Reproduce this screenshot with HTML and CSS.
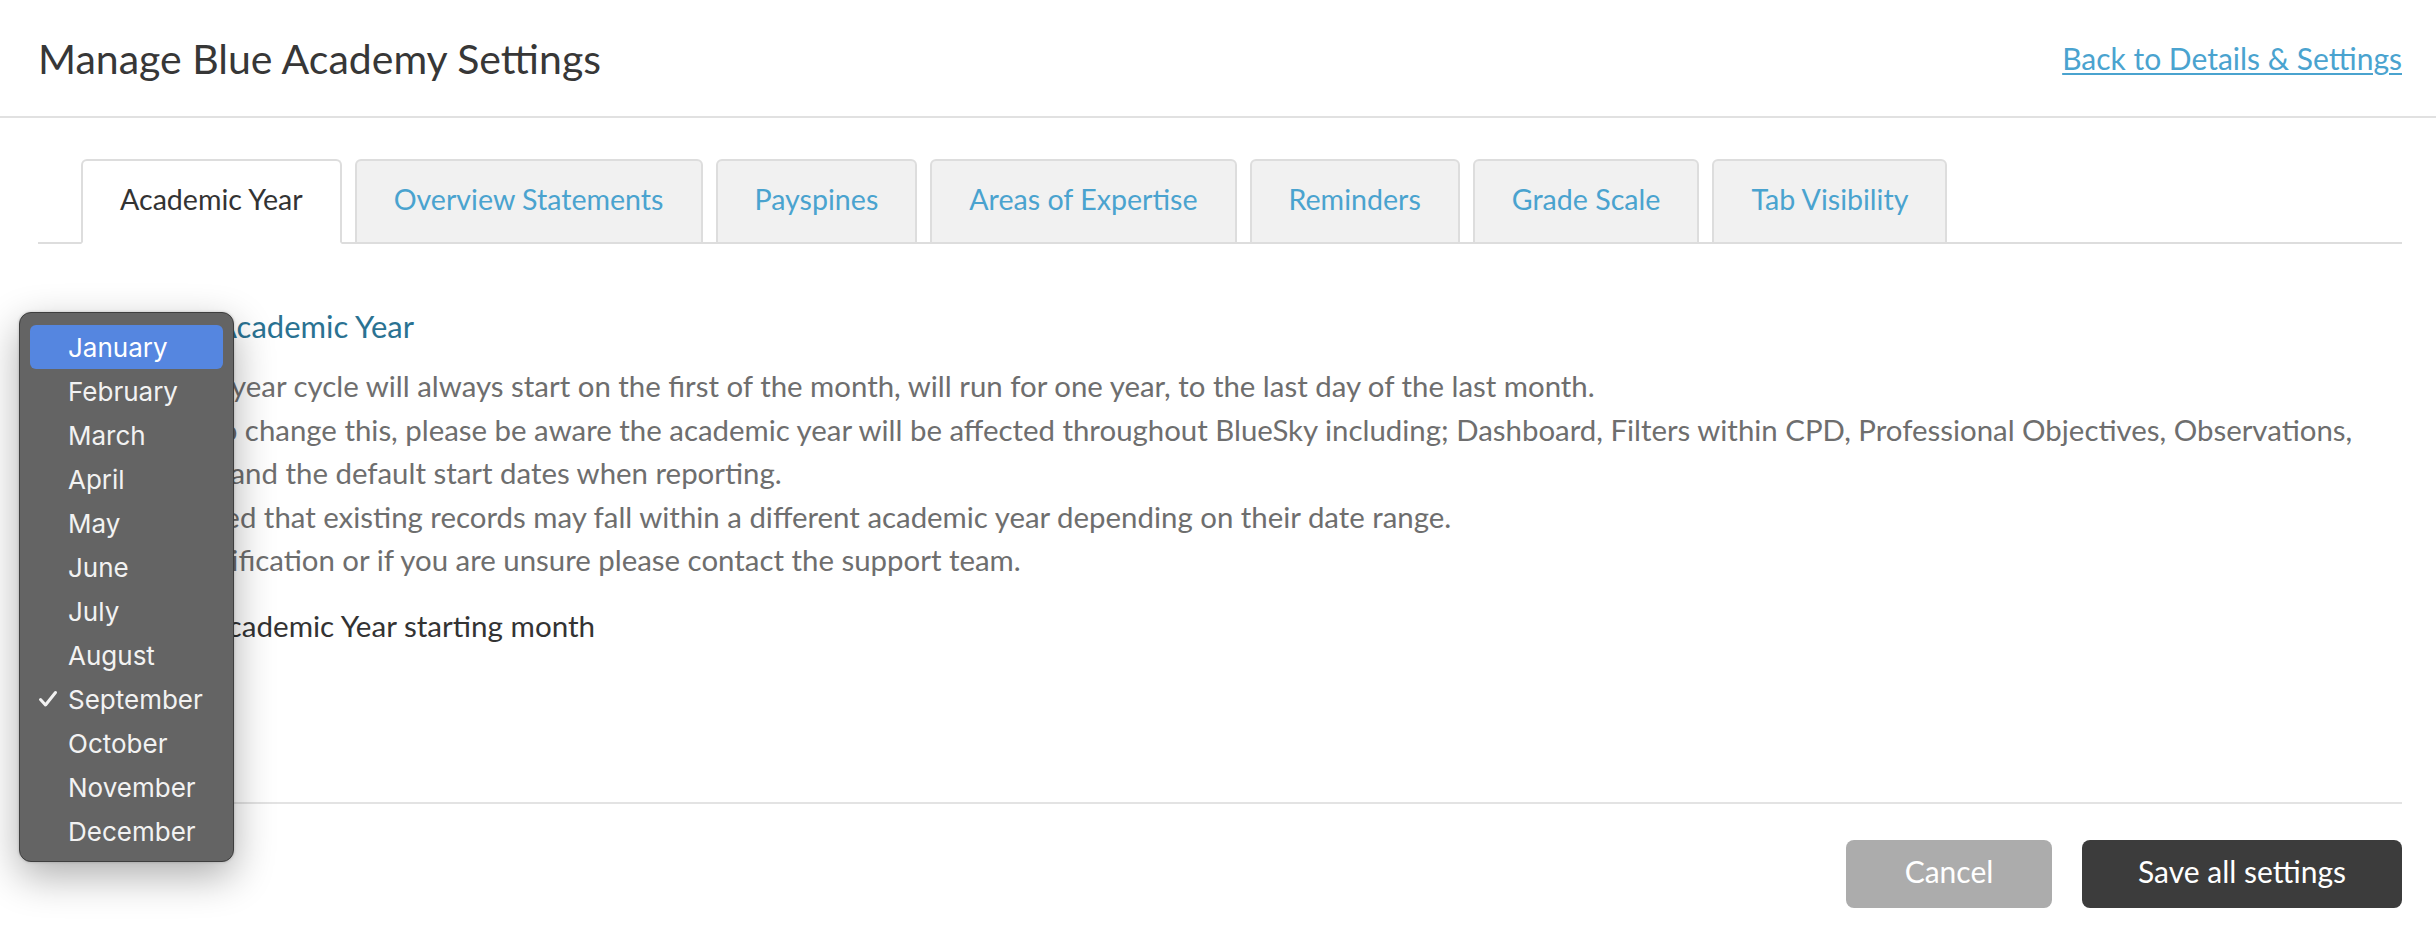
FILE: index.html
```html
<!DOCTYPE html>
<html lang="en">
<head>
<meta charset="utf-8">
<title>Manage Blue Academy Settings</title>
<link rel="stylesheet" href="styles.css">
</head>
<body>
<header class="page-header">
  <h1 class="page-title">Manage Blue Academy Settings</h1>
  <a class="back-link" href="#">Back to Details &amp; Settings</a>
</header>
<main class="content">
  <nav class="tabs">
    <a class="tab active" href="#">Academic Year</a>
    <a class="tab" href="#">Overview Statements</a>
    <a class="tab" href="#">Payspines</a>
    <a class="tab" href="#">Areas of Expertise</a>
    <a class="tab" href="#">Reminders</a>
    <a class="tab" href="#">Grade Scale</a>
    <a class="tab" href="#">Tab Visibility</a>
  </nav>
  <section class="panel">
    <h2 class="panel-title">Change your Academic Year</h2>
    <div class="intro">
      <p>Your academic year cycle will always start on the first of the month, will run for one year, to the last day of the last month.</p>
      <p>If you decide to change this, please be aware the academic year will be affected throughout BlueSky including; Dashboard, Filters within CPD, Professional Objectives, Observations,<br>Staff Appraisal and the default start dates when reporting.</p>
      <p>It could be noted that existing records may fall within a different academic year depending on their date range.</p>
      <p>For further clarification or if you are unsure please contact the support team.</p>
    </div>
    <label class="field-label">Choose your Academic Year starting month</label>
    <div class="select-box">September</div>
  </section>
  <footer class="actions">
    <button class="btn btn-cancel" type="button">Cancel</button>
    <button class="btn btn-save" type="button">Save all settings</button>
  </footer>
</main>
<ul class="month-menu">
  <li class="highlight">January</li>
  <li>February</li>
  <li>March</li>
  <li>April</li>
  <li>May</li>
  <li>June</li>
  <li>July</li>
  <li>August</li>
  <li class="checked"><svg class="check" viewBox="0 0 20 18" width="20" height="18"><path d="M2.5 9.5 L7.5 15 L17.5 2.5" fill="none" stroke="#f2f2f2" stroke-width="3" stroke-linecap="round" stroke-linejoin="round"/></svg>September</li>
  <li>October</li>
  <li>November</li>
  <li>December</li>
</ul>
</body>
</html>
```
FILE: styles.css
```css
html, body {
  margin: 0;
  padding: 0;
}

body {
  position: relative;
  width: 2436px;
  height: 938px;
  overflow: hidden;
  background: #ffffff;
  color: #333333;
  font-family: Lato, "Liberation Sans", sans-serif;
}

.page-header {
  display: flex;
  justify-content: space-between;
  align-items: center;
  height: 116px;
  padding: 0 34px 0 38px;
  border-bottom: 2px solid #e1e1e1;
}

.page-title {
  margin: 0;
  font-size: 41px;
  font-weight: 400;
  color: #373737;
}

.back-link {
  font-size: 30px;
  color: #4aa3cf;
  text-decoration: underline;
  text-decoration-thickness: 2px;
  text-underline-offset: 3px;
}

.content {
  padding: 41px 34px 0 38px;
}

.tabs {
  display: flex;
  gap: 13px;
  padding-left: 43px;
  border-bottom: 2px solid #dddddd;
}

.tab {
  box-sizing: border-box;
  height: 85px;
  margin-bottom: -2px;
  padding: 0 37px 5px;
  display: flex;
  align-items: center;
  border: 2px solid #dddddd;
  border-radius: 6px 6px 0 0;
  background: #f1f1f1;
  color: #4aa3cf;
  font-size: 28.6px;
  text-decoration: none;
}

.tab.active {
  background: #ffffff;
  color: #333333;
  border-bottom-color: #ffffff;
}

.panel {
  padding: 64px 0 97px;
}

.panel-title {
  margin: 0 0 19px;
  font-size: 31px;
  line-height: 37px;
  font-weight: 400;
  color: #2a7292;
}

.intro p {
  margin: 0;
  font-size: 29.4px;
  line-height: 43.5px;
  color: #6e6e6e;
}

.field-label {
  display: block;
  margin-top: 23px;
  font-size: 29.6px;
  line-height: 42px;
  color: #333333;
}

.select-box {
  box-sizing: border-box;
  width: 180px;
  height: 44px;
  margin-top: 14px;
  padding: 0 12px;
  display: flex;
  align-items: center;
  border: 2px solid #cccccc;
  border-radius: 6px;
  font-size: 26px;
}

.actions {
  display: flex;
  justify-content: flex-end;
  gap: 30px;
  padding-top: 36px;
  border-top: 2px solid #e3e3e3;
}

.btn {
  height: 68px;
  padding: 0 0 5px;
  border: none;
  border-radius: 8px;
  color: #ffffff;
  font-family: Lato, "Liberation Sans", sans-serif;
  font-size: 30px;
}

.btn-cancel {
  width: 206px;
  background: #acacac;
}

.btn-save {
  width: 320px;
  background: #3c3c3c;
}

.month-menu {
  position: absolute;
  left: 19px;
  top: 312px;
  box-sizing: border-box;
  width: 215px;
  margin: 0;
  padding: 12px 10px 8px;
  list-style: none;
  background: #646464;
  border: 1px solid #3e3e3e;
  border-radius: 12px;
  box-shadow: 0 14px 40px rgba(0, 0, 0, 0.32), 0 0 3px rgba(0, 0, 0, 0.2);
  font-family: Inter, "Noto Sans", sans-serif;
  font-size: 26px;
  color: #f2f2f2;
}

.month-menu li {
  position: relative;
  height: 44px;
  display: flex;
  align-items: center;
  padding-left: 38px;
  border-radius: 6px;
}

.month-menu li.highlight {
  background: #5586e0;
  color: #ffffff;
}

.month-menu .check {
  position: absolute;
  left: 8px;
  top: 13px;
}
```
